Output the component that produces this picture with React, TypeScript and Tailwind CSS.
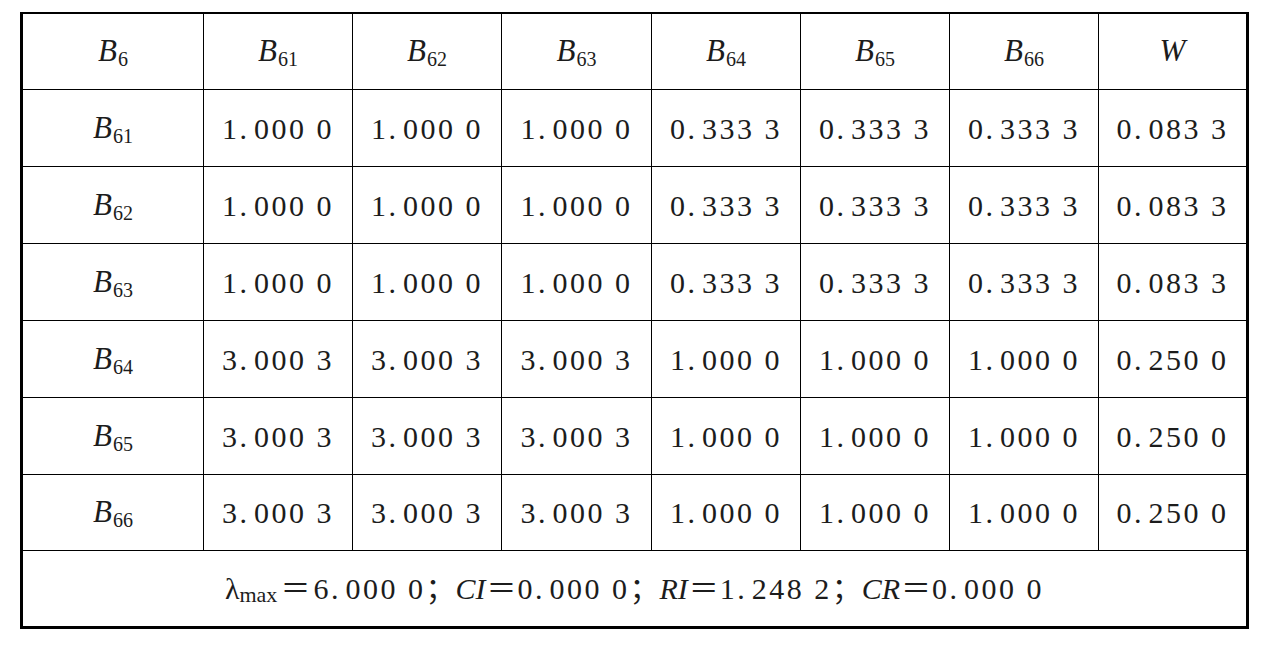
import React from "react";

const cols = ["B61", "B62", "B63", "B64", "B65", "B66"];

const rows: { label: string; values: string[] }[] = [
  { label: "61", values: ["1.000 0", "1.000 0", "1.000 0", "0.333 3", "0.333 3", "0.333 3", "0.083 3"] },
  { label: "62", values: ["1.000 0", "1.000 0", "1.000 0", "0.333 3", "0.333 3", "0.333 3", "0.083 3"] },
  { label: "63", values: ["1.000 0", "1.000 0", "1.000 0", "0.333 3", "0.333 3", "0.333 3", "0.083 3"] },
  { label: "64", values: ["3.000 3", "3.000 3", "3.000 3", "1.000 0", "1.000 0", "1.000 0", "0.250 0"] },
  { label: "65", values: ["3.000 3", "3.000 3", "3.000 3", "1.000 0", "1.000 0", "1.000 0", "0.250 0"] },
  { label: "66", values: ["3.000 3", "3.000 3", "3.000 3", "1.000 0", "1.000 0", "1.000 0", "0.250 0"] },
];

const heights = ["h-[77px]", "h-[77px]", "h-[77px]", "h-[77px]", "h-[77px]", "h-[76px]"];

// period in these numbers sits a little wider than in Times
const Num = ({ v }: { v: string }) => {
  const [a, b] = v.split(".");
  return (
    <span className="text-[30px] tracking-[2.5px] whitespace-pre">
      {a}
      <span className="mr-[4.5px]">.</span>
      {b}
    </span>
  );
};

const B = ({ sub }: { sub: string }) => (
  <span className="whitespace-nowrap">
    <span className="italic text-[31px]">B</span>
    <span className="text-[20px] relative top-[5px] ml-[1px]">{sub}</span>
  </span>
);

const Cell = ({ children, last }: { children: React.ReactNode; last?: boolean }) => (
  <div
    className={
      "flex items-center justify-center " + (last ? "" : "border-r border-black")
    }
  >
    {children}
  </div>
);

const grid =
  "grid grid-cols-[181px_149px_149px_150px_149px_149px_149px_147px] border-b border-black";

export default function App() {
  return (
    <div className="w-[1268px] h-[648px] bg-white text-[#1c1c1c] pt-[12px] pl-[20px] [font-family:'Liberation_Serif','Noto_Sans_CJK_SC',serif]">
      <div className="w-[1229px] border-t-2 border-l-3 border-r-3 border-b-3 border-black">
        <div className={grid + " h-[76px]"}>
          <Cell>
            <B sub="6" />
          </Cell>
          {cols.map((c) => (
            <Cell key={c}>
              <B sub={c.slice(1)} />
            </Cell>
          ))}
          <Cell last>
            <span className="italic text-[31px]">W</span>
          </Cell>
        </div>

        {rows.map((r, i) => (
          <div key={r.label} className={grid + " " + heights[i]}>
            <Cell>
              <B sub={r.label} />
            </Cell>
            {r.values.map((v, j) => (
              <Cell key={j} last={j === r.values.length - 1}>
                <Num v={v} />
              </Cell>
            ))}
          </div>
        ))}

        <div className="h-[75px] flex items-center justify-center text-[30px] whitespace-pre">
          <span>λ</span>
          <span className="text-[22px] relative top-[6px]">max</span>
          <span className="mx-[3px]">＝</span>
          <Num v="6.000 0" />
          <span>；</span>
          <span className="italic">CI</span>
          <span className="mx-[1px]">＝</span>
          <Num v="0.000 0" />
          <span>；</span>
          <span className="italic">RI</span>
          <span className="mx-[1px]">＝</span>
          <Num v="1.248 2" />
          <span>；</span>
          <span className="italic">CR</span>
          <span className="mx-[1px]">＝</span>
          <Num v="0.000 0" />
        </div>
      </div>
    </div>
  );
}
